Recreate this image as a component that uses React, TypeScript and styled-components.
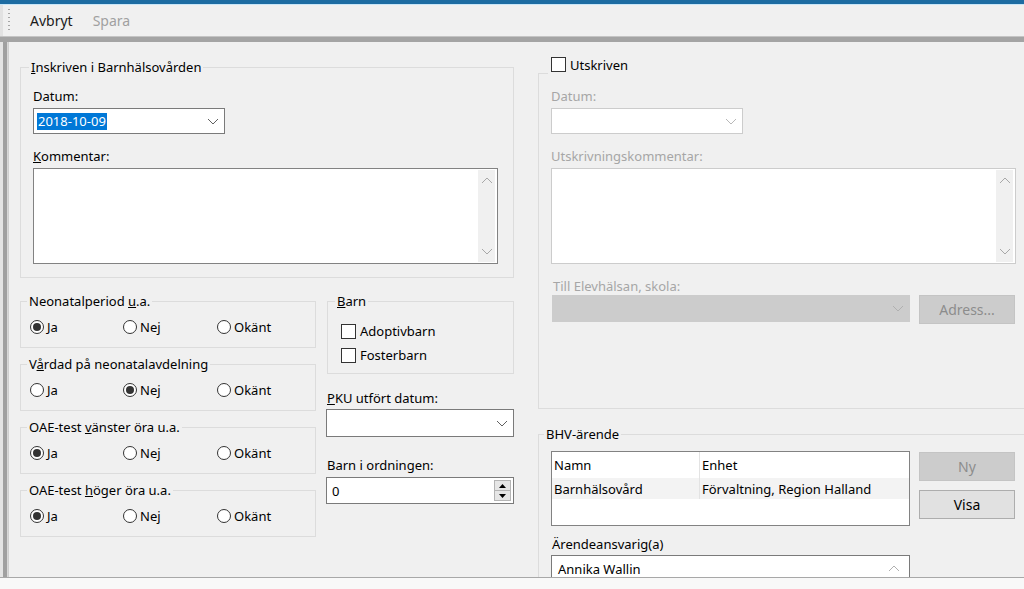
import styled, { createGlobalStyle } from "styled-components";

const GlobalStyle = createGlobalStyle`
  html, body {
    margin: 0;
    padding: 0;
    background: #f0f0f0;
    overflow: hidden;
  }
  body {
    font-family: "Noto Sans", "Open Sans", sans-serif;
    font-size: 13px;
    color: #000;
  }
  * {
    box-sizing: border-box;
  }
`;

const Chevron = ({ up, color = "#606060" }: { up?: boolean; color?: string }) => (
  <svg width="12" height="7" viewBox="0 0 12 7">
    <polyline
      points={up ? "1,6 6,1 11,6" : "1,1 6,6 11,1"}
      fill="none"
      stroke={color}
      strokeWidth="1"
    />
  </svg>
);

const Triangle = ({ up }: { up?: boolean }) => (
  <svg width="7" height="4" viewBox="0 0 7 4">
    <polygon points={up ? "0,4 3.5,0 7,4" : "0,0 7,0 3.5,4"} fill="#000" />
  </svg>
);

const Radio = ({ label, checked }: { label: string; checked?: boolean }) => (
  <RadioItem>
    <RadioCircle>{checked && <RadioDot />}</RadioCircle>
    {label}
  </RadioItem>
);

const RadioGroup = ({ title, value }: { title: React.ReactNode; value: number }) => (
  <Group $h={55}>
    <Legend $x={6}>{title}</Legend>
    <RadioRow>
      <Radio label="Ja" checked={value === 0} />
      <Radio label="Nej" checked={value === 1} />
      <Radio label="Okänt" checked={value === 2} />
    </RadioRow>
  </Group>
);

const Scroller = () => (
  <ScrollTrack>
    <Chevron up color="#a8a8a8" />
    <Chevron color="#a8a8a8" />
  </ScrollTrack>
);

const App = () => {
  return (
    <Window>
      <GlobalStyle />
      <TitleStrip />
      <Toolbar>
        <Grip />
        <ToolButton>Avbryt</ToolButton>
        <ToolButton $disabled>Spara</ToolButton>
      </Toolbar>
      <Splitter />
      <Body>
        <Rail />
        <Content>
          <LeftCol>
            <Group $h={219}>
              <Legend $x={8}>
                <u>I</u>nskriven i Barnhälsovården
              </Legend>
              <GroupInner>
                <Label $mt={13}>Datum:</Label>
                <Combo $w={192} $h={26} $mt={4}>
                  <Selected>2018-10-09</Selected>
                  <Chevron />
                </Combo>
                <Label $mt={14}>
                  <u>K</u>ommentar:
                </Label>
                <TextArea $w={465} $mt={4}>
                  <Scroller />
                </TextArea>
              </GroupInner>
            </Group>
            <Split>
              <RadioCol>
                <RadioGroup
                  title={
                    <>
                      Neonatalperiod <u>u</u>.a.
                    </>
                  }
                  value={0}
                />
                <RadioGroup
                  title={
                    <>
                      V<u>å</u>rdad på neonatalavdelning
                    </>
                  }
                  value={1}
                />
                <RadioGroup
                  title={
                    <>
                      OAE-test <u>v</u>änster öra u.a.
                    </>
                  }
                  value={0}
                />
                <RadioGroup
                  title={
                    <>
                      OAE-test <u>h</u>öger öra u.a.
                    </>
                  }
                  value={0}
                />
              </RadioCol>
              <SideCol>
                <Group $h={81} $full>
                  <Legend $x={7}>
                    <u>B</u>arn
                  </Legend>
                  <CheckList>
                    <CheckItem>
                      <CheckBox />
                      Adoptivbarn
                    </CheckItem>
                    <CheckItem>
                      <CheckBox />
                      Fosterbarn
                    </CheckItem>
                  </CheckList>
                </Group>
                <Label $mt={16}>
                  <u>P</u>KU utfört datum:
                </Label>
                <Combo $w={188} $h={28} $mt={3} $shift={-1}>
                  <span />
                  <Chevron />
                </Combo>
                <Label $mt={20}>Barn i ordningen:</Label>
                <Spin>
                  <span>0</span>
                  <SpinButtons>
                    <SpinHalf>
                      <Triangle up />
                    </SpinHalf>
                    <SpinHalf $bottom>
                      <Triangle />
                    </SpinHalf>
                  </SpinButtons>
                </Spin>
              </SideCol>
            </Split>
          </LeftCol>
          <RightCol>
            <CheckHeader>
              <CheckBox />
              Utskriven
            </CheckHeader>
            <OpenBox>
              <Label $mt={15} $disabled>
                Datum:
              </Label>
              <Combo $w={192} $h={26} $mt={4} $disabled>
                <span />
                <Chevron color="#b8b8b8" />
              </Combo>
              <Label $mt={14} $disabled>
                Utskrivningskommentar:
              </Label>
              <TextArea $w={465} $mt={4} $disabled>
                <Scroller />
              </TextArea>
              <Label $mt={14} $disabled $indent={2}>
                Till Elevhälsan, skola:
              </Label>
              <SchoolRow>
                <Combo $w={358} $h={27} $mt={0} $locked $shift={1}>
                  <span />
                  <Chevron color="#b0b0b0" />
                </Combo>
                <Button $disabled>Adress...</Button>
              </SchoolRow>
            </OpenBox>
            <Group $h={200} $mt={17}>
              <Legend $x={5}>BHV-ärende</Legend>
              <GroupInner $pt={9}>
                <CaseRow>
                  <List>
                    <ListRow $h={26}>
                      <NameCell>Namn</NameCell>
                      <UnitCell>Enhet</UnitCell>
                    </ListRow>
                    <ListRow $h={21} $shade>
                      <NameCell>Barnhälsovård</NameCell>
                      <UnitCell>Förvaltning, Region Halland</UnitCell>
                    </ListRow>
                  </List>
                  <ButtonCol>
                    <Button $disabled>Ny</Button>
                    <Button>Visa</Button>
                  </ButtonCol>
                </CaseRow>
                <Label $mt={10} $indent={1}>
                  Ärendeansvarig(a)
                </Label>
                <OwnerBox>
                  <span>Annika Wallin</span>
                  <Chevron up color="#b0b0b0" />
                </OwnerBox>
              </GroupInner>
            </Group>
          </RightCol>
        </Content>
      </Body>
      <StatusBar />
    </Window>
  );
};

export default App;

const Window = styled.div`
  width: 1024px;
  height: 589px;
  display: flex;
  flex-direction: column;
  overflow: hidden;
`;
const TitleStrip = styled.div`
  height: 5px;
  background: #1d6ca2;
  border-bottom: 1px solid #c9e6f8;
`;
const Toolbar = styled.div`
  height: 31px;
  display: flex;
  align-items: center;
  padding-left: 8px;
  border-left: 3px solid #e2e2e2;
`;
const Grip = styled.div`
  width: 2px;
  height: 24px;
  margin-left: -3px;
  margin-right: 10px;
  background: repeating-linear-gradient(to bottom, #a6a6a6 0 1px, transparent 1px 4px);
`;
const ToolButton = styled.div<{ $disabled?: boolean }>`
  padding: 0 10px;
  font-size: 14px;
  line-height: 20px;
  color: ${(p) => (p.$disabled ? "#a0a0a0" : "#1a1a1a")};
`;
const Splitter = styled.div`
  height: 6px;
  background: #a4a4a4;
  border-top: 1px solid #c4c4c4;
`;
const Body = styled.div`
  flex: 1;
  display: flex;
  overflow: hidden;
  border-left: 3px solid #e4e4e4;
`;
const Rail = styled.div`
  width: 5px;
  background: #a0a0a0;
  border-right: 1px solid #d8d8d8;
  flex-shrink: 0;
`;
const Content = styled.div`
  flex: 1;
  display: flex;
  align-items: flex-start;
  gap: 24px;
  padding: 14px 0 0 11px;
  overflow: hidden;
  border-left: 1px solid #cfcfcf;
`;
const LeftCol = styled.div`
  width: 494px;
  flex-shrink: 0;
  margin-top: 3px;
  display: flex;
  flex-direction: column;
`;
const RightCol = styled.div`
  width: 500px;
  flex-shrink: 0;
  display: flex;
  flex-direction: column;
`;
const Group = styled.fieldset<{ $h: number; $mt?: number; $full?: boolean }>`
  margin: ${(p) => p.$mt ?? 0}px 0 0 0;
  padding: 0;
  min-width: 0;
  width: ${(p) => (p.$full ? "100%" : "auto")};
  height: ${(p) => p.$h}px;
  border: 1px solid #dcdcdc;
`;
const Legend = styled.legend<{ $x: number }>`
  margin-left: ${(p) => p.$x}px;
  padding: 0 2px;
  line-height: 16px;
  font-size: 13px;
`;
const GroupInner = styled.div<{ $pt?: number }>`
  padding: ${(p) => p.$pt ?? 0}px 0 0 12px;
  display: flex;
  flex-direction: column;
  align-items: flex-start;
`;
const Label = styled.div<{ $mt: number; $disabled?: boolean; $indent?: number }>`
  margin-top: ${(p) => p.$mt}px;
  padding-left: ${(p) => p.$indent ?? 0}px;
  line-height: 16px;
  color: ${(p) => (p.$disabled ? "#a6a6a6" : "#000")};
`;
const Combo = styled.div<{
  $w: number;
  $h: number;
  $mt: number;
  $disabled?: boolean;
  $locked?: boolean;
  $shift?: number;
}>`
  width: ${(p) => p.$w}px;
  height: ${(p) => p.$h}px;
  margin-top: ${(p) => p.$mt}px;
  margin-left: ${(p) => p.$shift ?? 0}px;
  display: flex;
  align-items: center;
  justify-content: space-between;
  padding: 0 5px 0 3px;
  background: ${(p) => (p.$locked ? "#cccccc" : "#fff")};
  border: 1px solid
    ${(p) => (p.$locked ? "#cccccc" : p.$disabled ? "#cccccc" : "#7a7a7a")};
`;
const Selected = styled.span`
  background: #0078d7;
  color: #fff;
  line-height: 17px;
  padding: 0 1px;
`;
const TextArea = styled.div<{ $w: number; $mt: number; $disabled?: boolean }>`
  width: ${(p) => p.$w}px;
  height: 96px;
  margin-top: ${(p) => p.$mt}px;
  background: #fff;
  border: 1px solid ${(p) => (p.$disabled ? "#cccccc" : "#828282")};
  display: flex;
  justify-content: flex-end;
  padding: 1px 2px 1px 0;
`;
const ScrollTrack = styled.div`
  width: 17px;
  background: #f0f0f0;
  display: flex;
  flex-direction: column;
  align-items: center;
  justify-content: space-between;
  padding: 7px 0 7px;
`;
const Split = styled.div`
  display: flex;
  gap: 11px;
  margin-top: 15px;
`;
const RadioCol = styled.div`
  width: 296px;
  display: flex;
  flex-direction: column;
  gap: 8px;
`;
const RadioRow = styled.div`
  display: grid;
  grid-template-columns: 93px 94px auto;
  padding: 10px 0 0 9px;
`;
const RadioItem = styled.div`
  display: flex;
  align-items: center;
  gap: 3px;
  line-height: 16px;
`;
const RadioCircle = styled.div`
  width: 14px;
  height: 14px;
  border: 1px solid #333;
  border-radius: 50%;
  background: #fff;
  display: flex;
  align-items: center;
  justify-content: center;
`;
const RadioDot = styled.div`
  width: 8px;
  height: 8px;
  border-radius: 50%;
  background: #333;
`;
const SideCol = styled.div`
  width: 187px;
  display: flex;
  flex-direction: column;
  align-items: flex-start;
`;
const CheckList = styled.div`
  display: flex;
  flex-direction: column;
  gap: 8px;
  padding: 14px 0 0 13px;
`;
const CheckItem = styled.div`
  display: flex;
  align-items: center;
  gap: 4px;
  line-height: 16px;
`;
const CheckBox = styled.div`
  width: 15px;
  height: 15px;
  border: 1px solid #333;
  background: #fff;
  flex-shrink: 0;
`;
const Spin = styled.div`
  width: 188px;
  height: 27px;
  margin: 4px 0 0 -1px;
  display: flex;
  align-items: center;
  justify-content: space-between;
  padding: 0 2px 0 5px;
  background: #fff;
  border: 1px solid #7a7a7a;
`;
const SpinButtons = styled.div`
  width: 17px;
  height: 21px;
  display: flex;
  flex-direction: column;
  border: 1px solid #b4b4b4;
`;
const SpinHalf = styled.div<{ $bottom?: boolean }>`
  flex: 1;
  display: flex;
  align-items: center;
  justify-content: center;
  background: #e6e6e6;
  border-top: ${(p) => (p.$bottom ? "1px solid #b4b4b4" : "none")};
`;
const CheckHeader = styled.div`
  height: 17px;
  display: flex;
  align-items: center;
  gap: 4px;
  padding-left: 13px;
  line-height: 16px;
`;
const OpenBox = styled.div`
  position: relative;
  height: 336px;
  border: 1px solid #dcdcdc;
  border-top: none;
  padding-left: 12px;
  display: flex;
  flex-direction: column;
  align-items: flex-start;

  &::before {
    content: "";
    position: absolute;
    top: 0;
    left: -1px;
    width: 10px;
    height: 1px;
    background: #dcdcdc;
  }
`;
const SchoolRow = styled.div`
  display: flex;
  align-items: flex-start;
  gap: 9px;
  margin-top: 1px;
`;
const Button = styled.div<{ $disabled?: boolean }>`
  width: 96px;
  height: 29px;
  display: flex;
  align-items: center;
  justify-content: center;
  font-size: 14px;
  background: ${(p) => (p.$disabled ? "#cccccc" : "#e1e1e1")};
  border: 1px solid ${(p) => (p.$disabled ? "#c4c4c4" : "#adadad")};
  color: ${(p) => (p.$disabled ? "#8c8c8c" : "#000")};
`;
const CaseRow = styled.div`
  display: flex;
  gap: 9px;
`;
const List = styled.div`
  width: 359px;
  height: 75px;
  background: #fff;
  border: 1px solid #828282;
`;
const ListRow = styled.div<{ $h: number; $shade?: boolean }>`
  height: ${(p) => p.$h}px;
  display: flex;
  align-items: stretch;
  background: ${(p) => (p.$shade ? "#f3f3f3" : "#fff")};
`;
const NameCell = styled.div`
  width: 148px;
  padding-left: 2px;
  display: flex;
  align-items: center;
  border-right: 1px solid #e3e3e3;
`;
const UnitCell = styled.div`
  padding-left: 2px;
  display: flex;
  align-items: center;
`;
const ButtonCol = styled.div`
  display: flex;
  flex-direction: column;
  gap: 9px;
  padding-top: 1px;
`;
const OwnerBox = styled.div`
  width: 359px;
  height: 27px;
  margin-top: 3px;
  background: #fff;
  border: 1px solid #7a7a7a;
  display: flex;
  align-items: center;
  justify-content: space-between;
  padding: 0 9px 0 6px;
`;
const StatusBar = styled.div`
  height: 12px;
  flex-shrink: 0;
  background: #f8f8f8;
  border-top: 1px solid #a8a8a8;
`;
